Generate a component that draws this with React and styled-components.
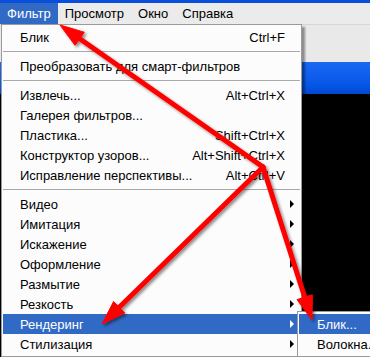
import styled, { createGlobalStyle } from 'styled-components';

const Global = createGlobalStyle`
  html, body { margin: 0; padding: 0; overflow: hidden; }
  body { font-family: "Liberation Sans", "DejaVu Sans", sans-serif; }
`;

const Screen = styled.div`
  position: relative;
  width: 370px;
  height: 357px;
  overflow: hidden;
  display: flex;
  flex-direction: column;
  background: #000;
  font-size: 13px;
`;

const TitleStrip = styled.div`
  height: 3px;
  background: #0a4fdc;
`;

const MenuBar = styled.div`
  display: flex;
  height: 21px;
  background: #ebebeb;
`;

const MenuTitle = styled.div`
  display: flex;
  align-items: center;
  padding: 0 7px;
  color: ${p => (p.$active ? '#fff' : '#000')};
  background: ${p => (p.$active ? '#316ac5' : 'transparent')};
`;

const Toolbar = styled.div`
  height: 37px;
  background: #e9e9e9;
  border-top: 1px solid #d6d6d6;
`;

const DocTitle = styled.div`
  height: 32px;
  background: linear-gradient(#1b68f2, #0757e8 70%, #0049d2);
`;

const Canvas = styled.div`
  flex: 1;
  background: #000;
`;

const Dropdown = styled.div`
  position: absolute;
  left: 1px;
  top: 24px;
  width: 297px;
  padding: 2px 1px;
  background: #fcfcfc;
  border: 1px solid #9a9a9a;
  box-shadow: 3px 3px 2px rgba(0, 0, 0, 0.4);
`;

const Item = styled.div`
  position: relative;
  display: flex;
  justify-content: space-between;
  align-items: center;
  height: 20px;
  padding: 0 15px 0 17px;
  white-space: nowrap;
  color: ${p => (p.$active ? '#fff' : '#000')};
  background: ${p => (p.$active ? '#316ac5' : 'transparent')};

  ${p => p.$sub && `
    &::after {
      content: '';
      position: absolute;
      right: 6px;
      top: 6px;
      border-left: 4px solid ${p.$active ? '#fff' : '#000'};
      border-top: 4px solid transparent;
      border-bottom: 4px solid transparent;
    }
  `}
`;

const Separator = styled.div`
  height: 9px;
  display: flex;
  align-items: center;
  &::before {
    content: '';
    flex: 1;
    height: 1px;
    background: #a8a8a8;
  }
`;

const SubMenu = styled.div`
  position: absolute;
  left: 297px;
  top: 311px;
  width: 90px;
  padding: 2px 1px;
  background: #fcfcfc;
  border: 1px solid #9a9a9a;
`;

const SubItem = styled(Item)`
  padding: 0 0 0 18px;
`;

const Overlay = styled.svg`
  position: absolute;
  left: 0;
  top: 0;
  pointer-events: none;
`;

const top = [
  ['Извлечь...', 'Alt+Ctrl+X'],
  ['Галерея фильтров...', ''],
  ['Пластика...', 'Shift+Ctrl+X'],
  ['Конструктор узоров...', 'Alt+Shift+Ctrl+X'],
  ['Исправление перспективы...', 'Alt+Ctrl+V'],
];

const groups = ['Видео', 'Имитация', 'Искажение', 'Оформление', 'Размытие', 'Резкость', 'Рендеринг', 'Стилизация'];

const joint = [263, 167];
const arrows = [
  [60, 25],
  [102, 324],
  [312, 320],
];

function head([x, y]) {
  const dx = x - joint[0];
  const dy = y - joint[1];
  const len = Math.hypot(dx, dy);
  const ux = dx / len, uy = dy / len;
  const bx = x - ux * 24, by = y - uy * 24;
  const nx = -uy * 8, ny = ux * 8;
  return `${x},${y} ${bx + nx},${by + ny} ${bx - nx},${by - ny}`;
}

function lineEnd([x, y]) {
  const dx = x - joint[0];
  const dy = y - joint[1];
  const len = Math.hypot(dx, dy);
  return [x - (dx / len) * 18, y - (dy / len) * 18];
}

export default function App() {
  return (
    <>
      <Global />
      <Screen>
        <TitleStrip />
        <MenuBar>
          <MenuTitle $active>Фильтр</MenuTitle>
          <MenuTitle>Просмотр</MenuTitle>
          <MenuTitle>Окно</MenuTitle>
          <MenuTitle>Справка</MenuTitle>
        </MenuBar>
        <Toolbar />
        <DocTitle />
        <Canvas />

        <Dropdown>
          <Item>
            <span>Блик</span>
            <span>Ctrl+F</span>
          </Item>
          <Separator />
          <Item>
            <span>Преобразовать для смарт-фильтров</span>
          </Item>
          <Separator />
          {top.map(([label, key]) => (
            <Item key={label}>
              <span>{label}</span>
              <span>{key}</span>
            </Item>
          ))}
          <Separator />
          {groups.map(label => (
            <Item key={label} $sub $active={label === 'Рендеринг'}>
              <span>{label}</span>
            </Item>
          ))}
        </Dropdown>

        <SubMenu>
          <SubItem $active>Блик...</SubItem>
          <SubItem>Волокна...</SubItem>
        </SubMenu>

        <Overlay width="370" height="357" viewBox="0 0 370 357">
          <defs>
            <filter id="sh" x="-10%" y="-10%" width="120%" height="120%">
              <feDropShadow dx="2" dy="2" stdDeviation="1.5" floodColor="#000" floodOpacity="0.45" />
            </filter>
          </defs>
          <g filter="url(#sh)" fill="#ff0000" stroke="#ff0000">
            {arrows.map((a, i) => {
              const [ex, ey] = lineEnd(a);
              return (
                <g key={i}>
                  <line x1={joint[0]} y1={joint[1]} x2={ex} y2={ey} strokeWidth="5" strokeLinecap="round" />
                  <polygon points={head(a)} strokeWidth="1" strokeLinejoin="round" />
                </g>
              );
            })}
          </g>
        </Overlay>
      </Screen>
    </>
  );
}
